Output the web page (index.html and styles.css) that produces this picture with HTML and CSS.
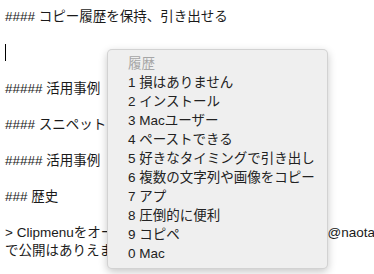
FILE: index.html
```html
<!DOCTYPE html>
<html lang="ja">
<head>
    <meta charset="UTF-8">
    <title>Clipmenu メモ</title>
    <link rel="stylesheet" href="styles.css">
</head>
<body>

<div class="editor">
    <div class="line">#### コピー履歴を保持、引き出せる</div>
    <div class="line"></div>
    <div class="line"><span class="caret"></span></div>
    <div class="line"></div>
    <div class="line">##### 活用事例</div>
    <div class="line"></div>
    <div class="line">#### スニペット</div>
    <div class="line"></div>
    <div class="line">##### 活用事例</div>
    <div class="line"></div>
    <div class="line">### 歴史</div>
    <div class="line"></div>
    <div class="line">&gt; Clipmenuをオープンソースとして公開してくれた、@naotakaさんに感謝</div>
    <div class="line">で公開はありえませんでした。</div>
</div>

<!-- 履歴メニュー -->
<div class="menu">
    <div class="menu-item header">履歴</div>
    <div class="menu-item">1 損はありません</div>
    <div class="menu-item">2 インストール</div>
    <div class="menu-item">3 Macユーザー</div>
    <div class="menu-item">4 ペーストできる</div>
    <div class="menu-item">5 好きなタイミングで引き出し</div>
    <div class="menu-item">6 複数の文字列や画像をコピー</div>
    <div class="menu-item">7 アプ</div>
    <div class="menu-item">8 圧倒的に便利</div>
    <div class="menu-item">9 コピペ</div>
    <div class="menu-item">0 Mac</div>
</div>

</body>
</html>
```

FILE: styles.css
```css
* {
    box-sizing: border-box;
}
body {
    margin: 0;
    background-color: #fff;
    font-family: "Liberation Sans", "Noto Sans CJK JP", sans-serif;
    overflow: hidden;
}
.editor {
    padding: 8px 0 0 5px;
    font-size: 13.5px;
    line-height: 18px;
    color: #1a1a1a;
}
.line {
    height: 18px;
    white-space: pre;
}
.caret {
    display: inline-block;
    width: 1px;
    height: 17px;
    background-color: #000;
    vertical-align: top;
}
.menu {
    position: absolute;
    left: 107px;
    top: 49px;
    width: 221px;
    padding: 4px 0 5px;
    background-color: #efefef;
    border: 1px solid rgba(0, 0, 0, 0.12);
    border-radius: 5px;
    box-shadow: 0px 3px 8px rgba(0, 0, 0, 0.22);
}
.menu-item {
    height: 19px;
    line-height: 19px;
    padding-left: 20px;
    font-size: 13.5px;
    color: #222;
    white-space: nowrap;
}
.menu-item.header {
    color: #a6a6a6;
}
```
